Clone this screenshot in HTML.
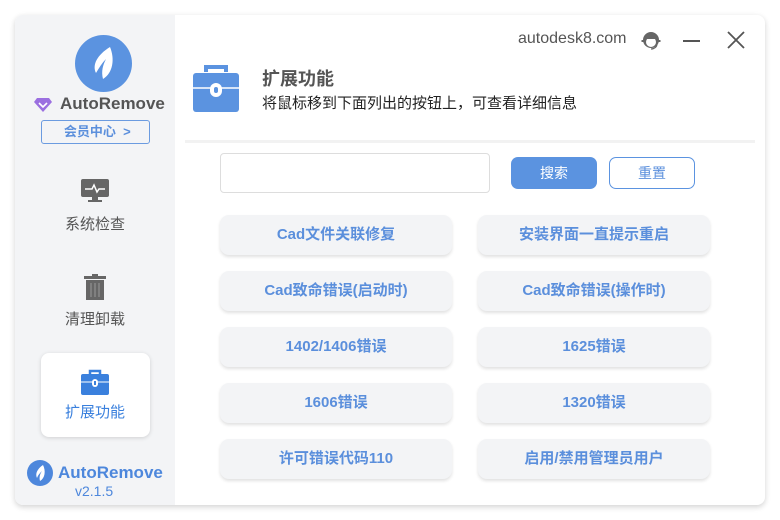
<!DOCTYPE html>
<html><head><meta charset="utf-8"><style>
*{margin:0;padding:0;box-sizing:border-box}
body{width:780px;height:520px;background:#fff;font-family:"Liberation Sans","Noto Sans CJK SC",sans-serif;position:relative;overflow:hidden}
.win{position:absolute;left:15px;top:15px;width:750px;height:490px;border-radius:8px;background:#fff;box-shadow:0 2px 6px rgba(0,0,0,.18);overflow:hidden}
.side{position:absolute;left:0;top:0;width:160px;height:490px;background:#f3f4f6}
.a{position:absolute}
.btn{position:absolute;width:232px;height:40px;background:#f3f4f6;border-radius:9px;box-shadow:0 2px 3px rgba(0,0,0,.12);color:#5b8fdc;font-weight:bold;font-size:15px;text-align:center;line-height:40px}
.nav{position:absolute;left:0;width:160px;text-align:center;font-size:15px;color:#555}
</style></head><body>
<div class="win">
<div class="side">
 <div class="a" style="left:60px;top:20px;width:57px;height:57px;border-radius:50%;background:#5b93e0"></div>
 <svg class="a" style="left:60px;top:20px" width="57" height="57" viewBox="0 0 57 57"><path d="M35 12 C22 20 17 30 21 38 C24 33 27 28 31 24 C28 30 26 36 28 44 C38 38 40 24 35 12Z" fill="#fff"/></svg>
 <svg class="a" style="left:18px;top:82px" width="20" height="16" viewBox="0 0 20 16"><path d="M4 1h12l3 4-9 10L1 5z" fill="#9b6fe0"/><path d="M6 6l4 4 4-4" stroke="#fff" stroke-width="1.6" fill="none"/></svg>
 <div class="a" style="left:45px;top:79px;font-size:17px;font-weight:bold;color:#555">AutoRemove</div>
 <div class="a" style="left:26px;top:105px;width:109px;height:24px;border:1px solid #6b9be0;border-radius:3px;color:#5b8fdc;font-weight:bold;font-size:13px;line-height:22px;text-align:center">&nbsp;会员中心&nbsp;&nbsp;&gt;</div>
 <svg class="a" style="left:66px;top:164px" width="28" height="24" viewBox="0 0 28 24"><rect x="0" y="0" width="28" height="18" rx="2" fill="#666"/><path d="M4 10h7l2-4 3 7 2-3h6" stroke="#fff" stroke-width="1.5" fill="none"/><rect x="11" y="18" width="6" height="3" fill="#666"/><rect x="7" y="21" width="14" height="2" fill="#666"/></svg>
 <div class="nav" style="top:198px">系统检查</div>
 <svg class="a" style="left:69px;top:259px" width="22" height="26" viewBox="0 0 22 26"><rect x="0" y="2" width="22" height="3" fill="#666"/><rect x="8" y="0" width="6" height="3" fill="#666"/><rect x="2" y="6" width="18" height="20" fill="#666"/><path d="M7 9v14M11 9v14M15 9v14" stroke="#999" stroke-width="1"/></svg>
 <div class="nav" style="top:293px">清理卸载</div>
 <div class="a" style="left:26px;top:338px;width:109px;height:84px;background:#fff;border-radius:8px;box-shadow:0 1px 4px rgba(0,0,0,.15)"></div>
 <svg class="a" style="left:66px;top:354px" width="28" height="26" viewBox="0 0 28 26"><path d="M9 5V2h10v3" stroke="#3a80dd" stroke-width="2.5" fill="none"/><rect x="0" y="5" width="28" height="21" rx="2" fill="#3a80dd"/><path d="M0 13h28" stroke="#fff" stroke-width="1"/><rect x="11" y="10" width="6" height="8" rx="3" fill="#fff"/><rect x="13" y="12" width="2" height="4" fill="#3a80dd"/></svg>
 <div class="nav" style="top:386px;color:#3a80dd">扩展功能</div>
 <svg class="a" style="left:12px;top:445px" width="26" height="26" viewBox="0 0 26 26"><circle cx="13" cy="13" r="13" fill="#4d87dc"/><path d="M16 5C10 9 8 14 10 18c1-3 3-5 5-7-2 3-3 6-2 10 5-3 6-10 3-16z" fill="#fff"/></svg>
 <div class="a" style="left:43px;top:448px;font-size:17px;font-weight:bold;color:#4d87dc">AutoRemove</div>
 <div class="a" style="left:60px;top:468px;font-size:14px;color:#4d87dc">v2.1.5</div>
</div>
<div class="a" style="left:503px;top:15px;font-size:16px;color:#555">autodesk8.com</div>
<svg class="a" style="left:626px;top:15px" width="20" height="22" viewBox="0 0 20 22"><circle cx="10" cy="10" r="8" fill="#666"/><circle cx="10" cy="12" r="5" fill="#fff"/><path d="M4 9c2-4 10-4 12 0" fill="#666"/><path d="M2 12v-2M18 12v-2" stroke="#666" stroke-width="3"/><path d="M16 14c0 3-3 5-6 5" stroke="#666" stroke-width="1.2" fill="none"/></svg>
<div class="a" style="left:668px;top:25px;width:17px;height:2px;background:#555"></div>
<svg class="a" style="left:712px;top:16px" width="18" height="18" viewBox="0 0 18 18"><path d="M1 1l16 16M17 1L1 17" stroke="#555" stroke-width="1.8"/></svg>
<svg class="a" style="left:178px;top:49px" width="46" height="48" viewBox="0 0 46 48"><path d="M13 8V3h20v5" stroke="#5b93e0" stroke-width="4" fill="none"/><rect x="0" y="9" width="46" height="39" rx="3" fill="#5b93e0"/><path d="M0 24h46" stroke="#fff" stroke-width="1.5"/><rect x="17" y="19" width="12" height="14" rx="6" fill="#fff"/><rect x="21" y="23" width="4" height="6" rx="2" fill="#5b93e0"/></svg>
<div class="a" style="left:247px;top:50px;font-size:18px;font-weight:bold;color:#555">扩展功能</div>
<div class="a" style="left:247px;top:77px;font-size:15px;color:#222">将鼠标移到下面列出的按钮上，可查看详细信息</div>
<div class="a" style="left:170px;top:125px;width:570px;height:3px;background:#f2f2f2"></div>
<div class="a" style="left:205px;top:138px;width:270px;height:40px;border:1px solid #ddd;border-radius:4px"></div>
<div class="a" style="left:496px;top:142px;width:86px;height:32px;background:#5b93e0;border-radius:7px;color:#fff;font-size:14px;text-align:center;line-height:32px">搜索</div>
<div class="a" style="left:594px;top:142px;width:86px;height:32px;border:1px solid #5b93e0;border-radius:7px;color:#5b8fdc;font-size:14px;text-align:center;line-height:30px">重置</div>
<div class="btn" style="left:205px;top:200px">Cad文件关联修复</div>
<div class="btn" style="left:463px;top:200px">安装界面一直提示重启</div>
<div class="btn" style="left:205px;top:256px">Cad致命错误(启动时)</div>
<div class="btn" style="left:463px;top:256px">Cad致命错误(操作时)</div>
<div class="btn" style="left:205px;top:312px">1402/1406错误</div>
<div class="btn" style="left:463px;top:312px">1625错误</div>
<div class="btn" style="left:205px;top:368px">1606错误</div>
<div class="btn" style="left:463px;top:368px">1320错误</div>
<div class="btn" style="left:205px;top:424px">许可错误代码110</div>
<div class="btn" style="left:463px;top:424px">启用/禁用管理员用户</div>
</div>
</body></html>
